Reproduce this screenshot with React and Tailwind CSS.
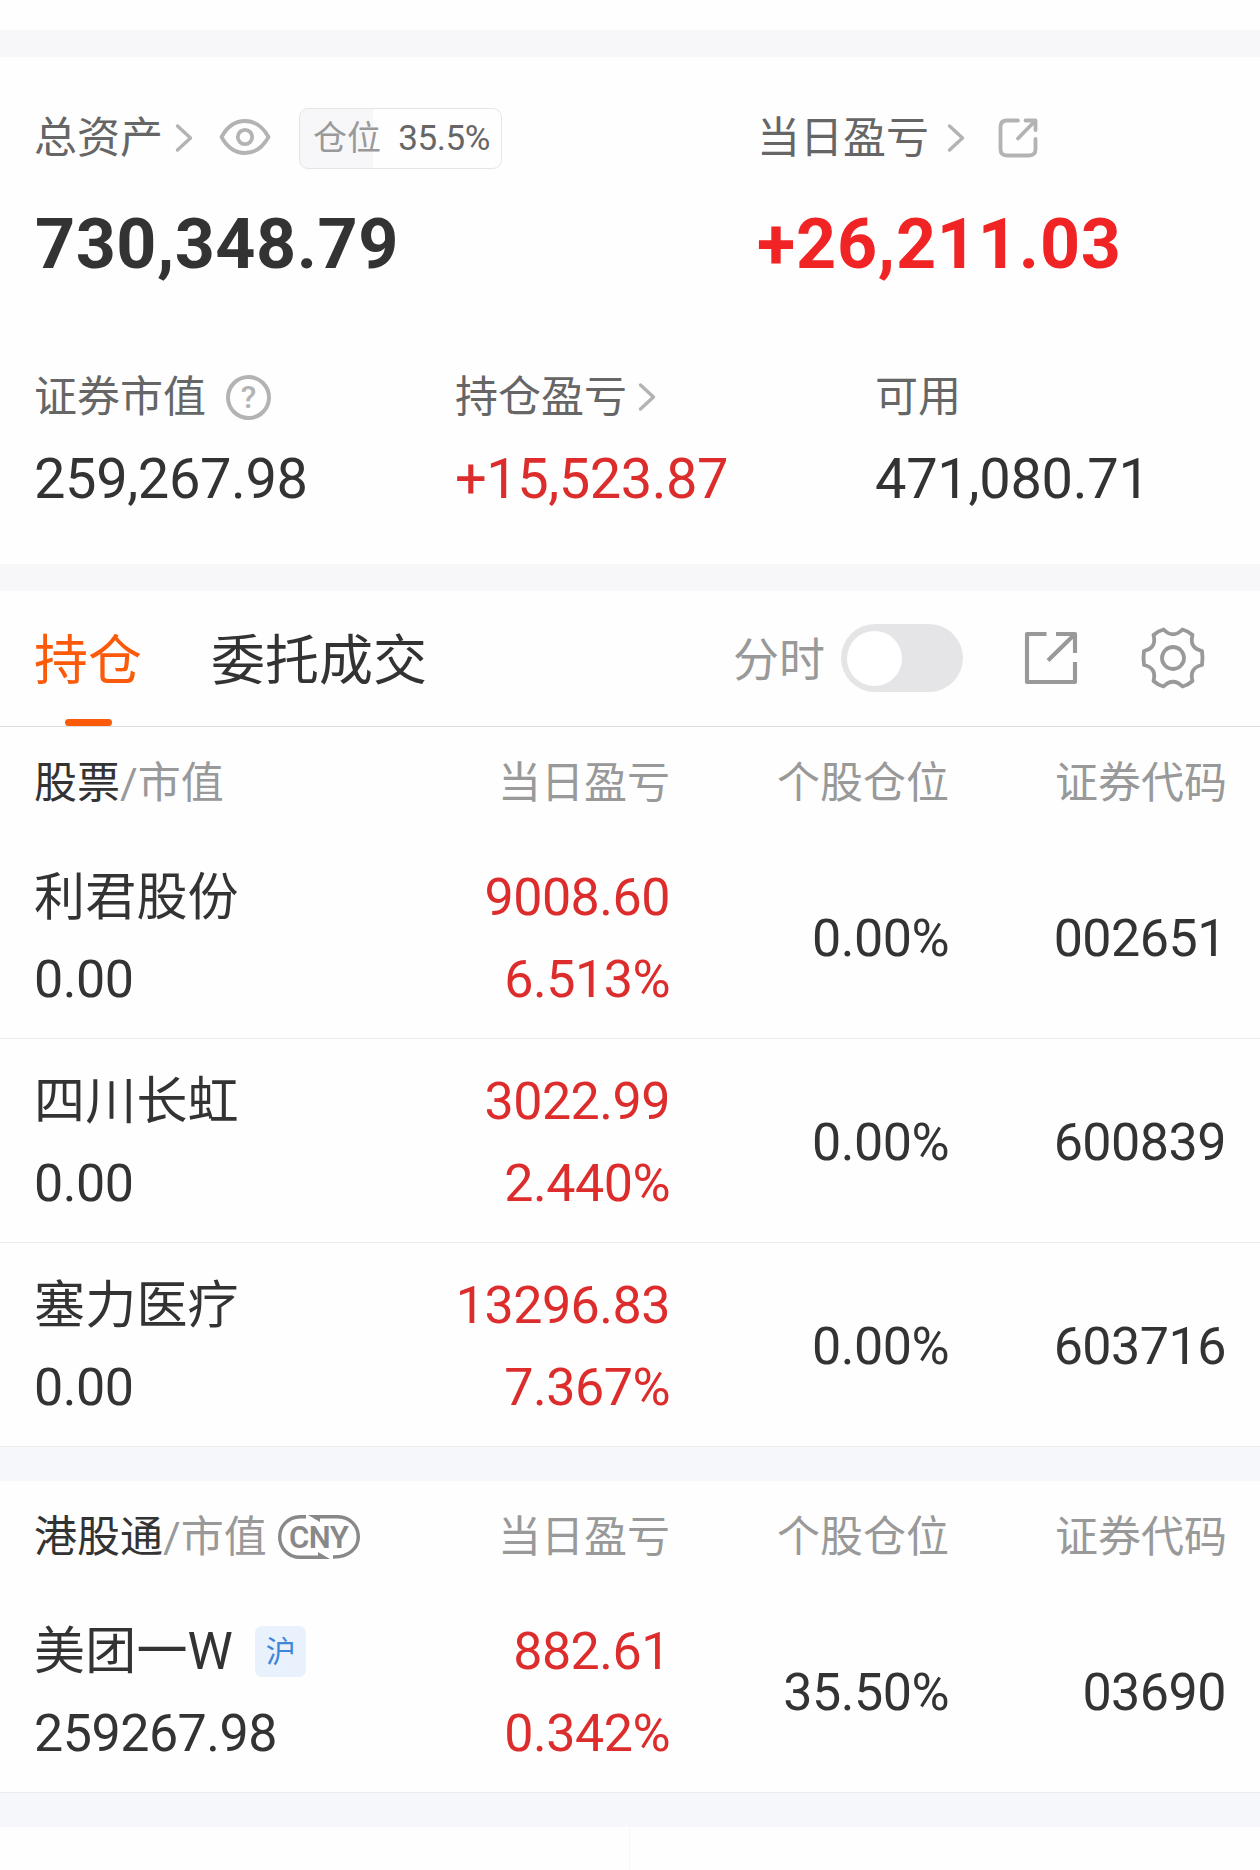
const FONT = "font-[Roboto,'Noto_Sans_CJK_SC',sans-serif]";

const STOCKS = [
  { name: "利君股份", value: "0.00", profit: "9008.60", rate: "6.513%", position: "0.00%", code: "002651" },
  { name: "四川长虹", value: "0.00", profit: "3022.99", rate: "2.440%", position: "0.00%", code: "600839" },
  { name: "塞力医疗", value: "0.00", profit: "13296.83", rate: "7.367%", position: "0.00%", code: "603716" },
];

const HK_STOCKS = [
  { name: "美团一W", tag: "沪", value: "259267.98", profit: "882.61", rate: "0.342%", position: "35.50%", code: "03690" },
];

function Chevron({ className }) {
  return (
    <svg viewBox="0 0 18 30" className={`w-[18px] h-[30px] ${className}`} fill="none" stroke="#b3b3b3" strokeWidth="3.4" strokeLinecap="round" strokeLinejoin="round">
      <path d="M2.5 3 L15.5 15 L2.5 27" />
    </svg>
  );
}

function EyeIcon() {
  return (
    <svg viewBox="0 0 52 38" className="w-[52px] h-[38px] ml-[26px] -mt-[2px]" fill="none" stroke="#b3b3b3" strokeWidth="3.8">
      <path d="M2.5 19 C8 9 16 3 26 3 C36 3 44 9 49.5 19 C44 29 36 35 26 35 C16 35 8 29 2.5 19 Z" strokeLinejoin="round" />
      <circle cx="26" cy="19" r="7.2" />
    </svg>
  );
}

function ShareRoundIcon() {
  return (
    <svg viewBox="0 0 40 40" className="w-10 h-10 ml-[33px]" fill="none" stroke="#b3b3b3" strokeWidth="3.8" strokeLinecap="round" strokeLinejoin="round">
      <path d="M20 2.5 H9 Q2.5 2.5 2.5 9 V31 Q2.5 37.5 9 37.5 H31 Q37.5 37.5 37.5 31 V21" />
      <path d="M27.5 2.5 H37.5 V12 M36.5 3.5 L20 20.5" />
    </svg>
  );
}

function ShareIcon() {
  return (
    <svg viewBox="0 0 54 54" className="w-[54px] h-[54px]" fill="none" stroke="#999" strokeWidth="4.1" strokeLinejoin="round">
      <path d="M22.5 3 H3 V51 H51 V31" />
      <path d="M32 3 H51 V22 M50 4 L24 29.5" />
    </svg>
  );
}

function GearIcon() {
  return (
    <svg viewBox="-32 -32 64 64" className="w-16 h-16" fill="none" stroke="#999" strokeWidth="3.8" strokeLinejoin="round">
      <path d="M-9.5 -28.5 Q0 -19 9.5 -28.5 Q15 -27 19.5 -23 Q16 -10 29 -7 Q30 0 29 7 Q16 10 19.5 23 Q15 27 9.5 28.5 Q0 19 -9.5 28.5 Q-15 27 -19.5 23 Q-16 10 -29 7 Q-30 0 -29 -7 Q-16 -10 -19.5 -23 Q-15 -27 -9.5 -28.5 Z" />
      <circle r="11" />
    </svg>
  );
}

function CnyBadge() {
  return (
    <span className="relative flex items-center justify-center w-[82px] h-[44px] ml-[11px]">
      <svg viewBox="0 0 82 44" className="absolute inset-0 w-full h-full" fill="none" stroke="#888" strokeWidth="3.4">
        <path d="M28 1.7 H22 C10 2 1.7 11 1.7 22 C1.7 33 10 42.3 22 42.3 H46" />
        <path d="M36 1.7 H60 C72 2 80.3 11 80.3 22 C80.3 33 71 42.3 55 42" />
        <path d="M30 0 H42 V7 Z M40 37 L52 44 H40 Z" fill="#888" stroke="none" />
      </svg>
      <span className="text-[31px] leading-none font-semibold tracking-[-0.5px] text-[#888]">CNY</span>
    </span>
  );
}

function SectionHeader({ title, children }) {
  return (
    <div className="flex items-center h-[108px] pt-[4px] pl-[34px] pr-[33px] text-[43px] leading-none text-[#999]">
      <div className="w-[406px] flex items-center">
        <span className="text-[#333]">{title}</span>/市值
        {children}
      </div>
      <div className="w-[230px] text-right">当日盈亏</div>
      <div className="w-[279px] text-right">个股仓位</div>
      <div className="flex-1 text-right">证券代码</div>
    </div>
  );
}

function StockRow({ stock }) {
  return (
    <div className="flex items-center h-[204px] pt-[4px] pl-[34px] pr-[34px] border-b border-[#ececec] text-[52px] leading-[82px] tracking-[-0.5px] text-[#333]">
      <div className="w-[306px]">
        <div className="flex items-center h-[82px] whitespace-nowrap">
          <span className="text-[51px] tracking-[0.2px]">{stock.name}</span>
          {stock.tag && (
            <span className="flex items-center justify-center w-[51px] h-[51px] ml-[22px] rounded-[7px] bg-[#e8f1fc] text-[30px] text-[#3f86d8]">
              {stock.tag}
            </span>
          )}
        </div>
        <div className="h-[82px]">{stock.value}</div>
      </div>
      <div className="w-[330px] text-right text-[#dc2c2c]">
        <div className="h-[82px]">{stock.profit}</div>
        <div className="h-[82px]">{stock.rate}</div>
      </div>
      <div className="w-[279px] text-right">{stock.position}</div>
      <div className="flex-1 text-right">{stock.code}</div>
    </div>
  );
}

export default function App() {
  return (
    <div className={`w-[1260px] h-[1870px] overflow-hidden bg-[#fefefe] ${FONT}`}>
      <div className="h-[30px]" />
      <div className="h-[27px] bg-[#f7f7fa]" />

      <div className="h-[507px] text-[43px] leading-none text-[#666]">
        <div className="flex pt-[50px] pl-[34px]">
          <div className="w-[723px]">
            <div className="flex items-center h-[62px]">
              总资产
              <Chevron className="ml-[12px]" />
              <EyeIcon />
              <div className="flex items-center justify-between w-[203px] h-[61px] ml-[28px] pl-[13px] pr-[11px] border border-[#e5e5e5] rounded-[9px] bg-[linear-gradient(to_right,#f7f7fa_36.5%,transparent_36.5%)] text-[34px]">
                <span className="text-[#999]">仓位</span>
                <span className="text-[35px] tracking-[-0.4px]">35.5%</span>
              </div>
            </div>
            <div className="mt-[40px] ml-px text-[70px] font-bold tracking-[0.5px] text-[#333]">730,348.79</div>
          </div>
          <div>
            <div className="flex items-center h-[62px]">
              当日盈亏
              <Chevron className="ml-[18px]" />
              <ShareRoundIcon />
            </div>
            <div className="mt-[40px] text-[70px] font-bold tracking-[0.8px] text-[#f02424]">+26,211.03</div>
          </div>
        </div>

        <div className="grid grid-cols-[421px_420px_1fr] pl-[34px] mt-[93px]">
          <div>
            <div className="flex items-center h-[50px]">
              证券市值
              <span className="flex items-center justify-center w-[45px] h-[45px] ml-[20px] rounded-full border-4 border-[#b3b3b3] text-[32px] font-medium text-[#b3b3b3]">?</span>
            </div>
            <div className="mt-[29px] text-[56px] tracking-[-0.4px] text-[#333]">259,267.98</div>
          </div>
          <div>
            <div className="flex items-center h-[50px]">
              持仓盈亏
              <Chevron className="ml-[11px]" />
            </div>
            <div className="mt-[29px] text-[56px] tracking-[-0.5px] text-[#dc2c2c]">+15,523.87</div>
          </div>
          <div>
            <div className="flex items-center h-[50px]">可用</div>
            <div className="mt-[29px] text-[56px] tracking-[-0.3px] text-[#333]">471,080.71</div>
          </div>
        </div>
      </div>

      <div className="h-[27px] bg-[#f7f7fa]" />

      <div className="flex h-[136px] pl-[34px] border-b border-[#dedede] text-[54px] leading-none text-[#333]">
        <div className="flex flex-col items-center h-[135px] text-[#fa5a0a]">
          <div className="flex items-center h-[128px] pt-[14px]">持仓</div>
          <div className="w-[47px] h-[7px] rounded-full bg-[#fa5a0a]" />
        </div>
        <div className="flex items-center h-[128px] pt-[14px] ml-[69px]">委托成交</div>
        <div className="flex items-center h-[134px] ml-auto pr-[55px]">
          <span className="mt-[3px] text-[46px] text-[#999]">分时</span>
          <div className="flex items-center w-[122px] h-[68px] ml-[16px] px-[6px] rounded-full bg-[#e5e5e7]">
            <div className="w-[55px] h-[55px] rounded-full bg-white" />
          </div>
          <div className="ml-[61px]"><ShareIcon /></div>
          <div className="ml-[63px]"><GearIcon /></div>
        </div>
      </div>

      <SectionHeader title="股票" />
      {STOCKS.map(stock => (
        <StockRow key={stock.code} stock={stock} />
      ))}

      <div className="h-[34px] bg-[#f6f7fa]" />

      <SectionHeader title="港股通">
        <CnyBadge />
      </SectionHeader>
      {HK_STOCKS.map(stock => (
        <StockRow key={stock.code} stock={stock} />
      ))}

      <div className="h-[34px] bg-[#f6f7fa]" />
      <div className="w-[630px] h-[43px] border-r border-[#f7f7f7]" />
    </div>
  );
}
